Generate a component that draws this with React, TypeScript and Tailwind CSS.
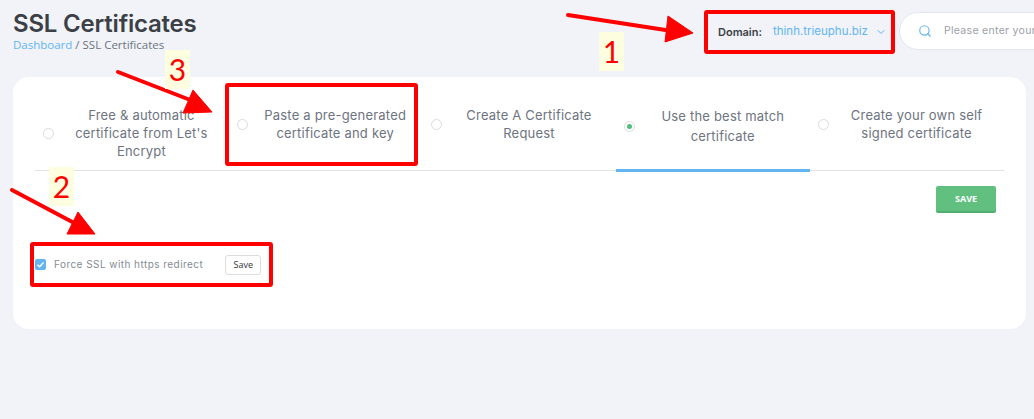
import React from "react";
import { ChevronDown, Search } from "lucide-react";

const tabs = [
  { label: <>Free &amp; automatic<br />certificate from Let's<br />Encrypt</> },
  { label: <>Paste a pre-generated<br />certificate and key</> },
  { label: <>Create A Certificate<br />Request</> },
  { label: <>Use the best match<br />certificate</>, active: true },
  { label: <>Create your own self<br />signed certificate</> },
];

function Arrows() {
  return (
    <svg className="absolute left-0 top-0 pointer-events-none" width="1034" height="419" viewBox="0 0 1034 419">
      <g stroke="#ff0000" strokeWidth="4" strokeLinecap="round" fill="#ff0000">
        <line x1="568" y1="15" x2="672" y2="31" />
        <line x1="118" y1="72" x2="198" y2="103" />
        <line x1="12" y1="190" x2="78" y2="225" />
      </g>
      <g fill="#ff0000" stroke="#ff0000" strokeWidth="1" strokeLinejoin="round">
        <polygon points="668,16 693,33 665,42" />
        <polygon points="193,90 212,112 183,113" />
        <polygon points="78,212 95,234 67,234" />
      </g>
    </svg>
  );
}

function Num({ n, cls }: { n: string; cls: string }) {
  return (
    <div className={`absolute w-[25px] h-[39px] bg-[#fdfde0] text-[#ff0000] text-[30px] leading-[39px] text-center font-['Lato',sans-serif] ${cls}`}>
      {n}
    </div>
  );
}

export default function App() {
  return (
    <div className="relative w-[1034px] h-[419px] overflow-hidden bg-[#f1f3f8] font-['Inter',sans-serif]">
      <header className="flex justify-between items-start h-[77px] pl-[13px]">
        <div className="pt-[10px]">
          <h1 className="text-[24px] leading-[28px] font-semibold tracking-[-0.2px] text-[#3b3f46]">SSL Certificates</h1>
          <p className="text-[11.5px] leading-[14px] text-[#6c7480] font-['Open_Sans',sans-serif]">
            <span className="text-[#62b5f0]">Dashboard</span> / SSL Certificates
          </p>
        </div>
        <div className="flex items-start pt-[10px] shrink-0 w-[330px]">
          <div className="flex items-center w-[191px] h-[44px] pl-[10px] box-border border-[4px] border-[#ff0000] rounded-[3px] mr-[4px] shrink-0">
            <span className="text-[11px] font-semibold text-[#3b3f46]">Domain:</span>
            <span className="ml-[11px] text-[#62b5f0] text-[11.5px]">thinh.trieuphu.biz</span>
            <ChevronDown className="ml-[7px] text-[#62b5f0]" size={12} />
          </div>
          <div className="flex items-center w-[200px] h-[38px] mt-[2px] bg-white border border-[#e3e6ee] rounded-l-[19px] pl-[18px] text-[10.5px] tracking-[0.3px] text-[#9aa0aa] shrink-0 whitespace-nowrap overflow-hidden">
            <Search size={14} className="text-[#62b5f0] mr-[12px] shrink-0" />
            Please enter your domain
          </div>
        </div>
      </header>
      <main className="ml-[13px] w-[1013px] h-[252px] bg-white rounded-[16px] px-[22px]">
        <div className="grid grid-cols-5 w-[969px] h-[94px] border-b border-[#e2e2e2]">
          {tabs.map((t, i) => (
            <div key={i} className={`flex items-start h-[95px] pl-[8px] pt-[29px] ${t.active ? "border-b-[3px] border-[#62b5f0]" : ""}`}>
              <div className="flex items-center w-full">
                <span className="w-[11px] h-[11px] rounded-full border border-[#dcdcdc] bg-white flex items-center justify-center shrink-0">
                  {t.active && <span className="w-[5px] h-[5px] rounded-full bg-[#4fbf7b]" />}
                </span>
                <div className={`flex-1 text-center text-[13px] tracking-[0.2px] text-[#6d7480] ${t.active ? "leading-[20px]" : "leading-[18px]"}`}>{t.label}</div>
              </div>
            </div>
          ))}
        </div>
        <div className="flex justify-end w-[961px] mt-[15px]">
          <button className="w-[60px] h-[27px] bg-[#61c080] border-b-[2px] border-[#52ad70] rounded-[2px] text-white text-[9px] font-bold font-['Open_Sans',sans-serif]">SAVE</button>
        </div>
        <div className="flex items-center w-[243px] h-[45px] mt-[29px] -ml-[5px] box-border border-[4px] border-[#ff0000] rounded-[3px]">
          <span className="ml-[1px] w-[11px] h-[11px] rounded-[2px] bg-[#62b5f0] flex items-center justify-center shrink-0">
            <svg width="9" height="9" viewBox="0 0 9 9"><path d="M1.5 4.7 3.6 6.7 7.5 2.5" stroke="#fff" strokeWidth="1.4" fill="none" /></svg>
          </span>
          <span className="ml-[8px] text-[10px] text-[#858b95] tracking-[0.45px] whitespace-nowrap">Force SSL with https redirect</span>
          <button className="ml-[22px] w-[36px] h-[20px] shrink-0 bg-white border border-[#dddddd] rounded-[3px] text-[9px] text-[#333] font-['Open_Sans',sans-serif]">Save</button>
        </div>
      </main>
      <div className="absolute left-[225px] top-[83px] w-[193px] h-[83px] border-[4px] border-[#ff0000] rounded-[3px] pointer-events-none" />
      <Arrows />
      <Num n="1" cls="left-[599px] top-[32px]" />
      <Num n="2" cls="left-[49px] top-[167px]" />
      <Num n="3" cls="left-[165px] top-[50px]" />
    </div>
  );
}
